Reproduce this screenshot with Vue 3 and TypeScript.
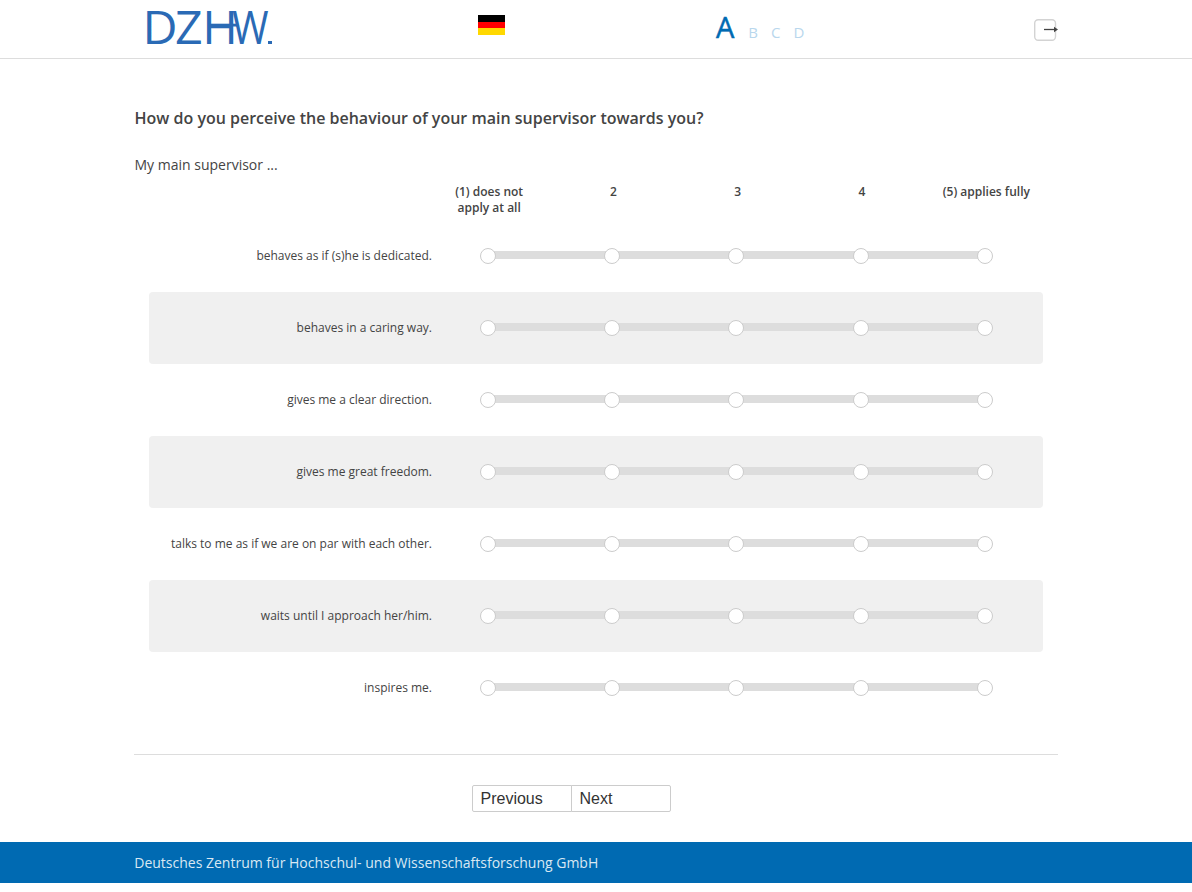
<script setup lang="ts">
const rows: string[] = [
  'behaves as if (s)he is dedicated.',
  'behaves in a caring way.',
  'gives me a clear direction.',
  'gives me great freedom.',
  'talks to me as if we are on par with each other.',
  'waits until I approach her/him.',
  'inspires me.',
]
const heads: string[] = ['(1) does not apply at all', '2', '3', '4', '(5) applies fully']
const steps: number[] = [1, 2, 3, 4, 5]
</script>

<template>
  <div class="page">
    <header class="topbar">
      <div class="topinner">
        <svg class="logo" width="140" height="50" viewBox="0 0 140 50">
          <text class="logotext" x="0 31 57" y="0" transform="translate(2.5 39) scale(1.05 1)">DZH</text>
          <text class="logotext" transform="translate(92 39) scale(0.86 1)">W</text>
          <rect x="68" y="18.7" width="30" height="2.8" fill="#2a6ab5" />
          <rect x="128" y="36" width="4" height="3" fill="#2a6ab5" />
        </svg>
        <div class="flag"><i class="black"></i><i class="red"></i><i class="gold"></i></div>
        <div class="modules">
          <span class="current">A</span>
          <span>B</span>
          <span>C</span>
          <span>D</span>
        </div>
        <svg class="logout" width="24" height="22" viewBox="0 0 24 22" fill="none">
          <rect x="0.7" y="0.7" width="20.8" height="20.6" rx="3.5" stroke="#d3d3d3" stroke-width="1.4" />
          <path d="M10 10.5H21" stroke="#444" stroke-width="1.3" />
          <path d="M20 7.8L24 10.5L20 13.2Z" fill="#444" />
        </svg>
      </div>
    </header>

    <main class="content">
      <h1 class="question">How do you perceive the behaviour of your main supervisor towards you?</h1>
      <p class="stem">My main supervisor ...</p>
      <div class="heads">
        <div v-for="h in heads" :key="h" class="head">{{ h }}</div>
      </div>
      <div class="rows">
        <div v-for="(r, i) in rows" :key="r" class="row" :class="{ alt: i % 2 === 1 }">
          <div class="label">{{ r }}</div>
          <div class="scale">
            <div class="track"></div>
            <span v-for="s in steps" :key="s" class="knob"></span>
          </div>
        </div>
      </div>
      <hr class="rule" />
      <div class="nav">
        <button class="btn" type="button">Previous</button>
        <button class="btn" type="button">Next</button>
      </div>
    </main>

    <footer class="footer">
      <div class="footinner">Deutsches Zentrum für Hochschul- und Wissenschaftsforschung GmbH</div>
    </footer>
  </div>
</template>

<style>
html, body { margin: 0; background: #fff; }
</style>

<style scoped>
.page {
  font-family: "Open Sans", sans-serif;
  color: #444;
  height: 892px;
  overflow: hidden;
}
.topbar {
  height: 58px;
  border-bottom: 1px solid #ddd;
}
.topinner {
  width: 924px;
  margin: 0 auto;
  height: 58px;
  display: flex;
  align-items: center;
  position: relative;
}
.logo {
  flex: none;
  margin-left: 6px;
  margin-top: 2px;
  overflow: visible;
}
.logotext {
  font-family: "Open Sans", sans-serif;
  font-weight: 400;
  font-size: 46px;
  fill: #2a6ab5;
}
.flag {
  flex: none;
  margin-left: 198px;
  width: 27px;
  height: 20px;
  display: flex;
  flex-direction: column;
  margin-top: -8px;
}
.flag i { flex: 1; display: block; }
.black { background: #000; }
.red { background: #f00; }
.gold { background: #ffd800; }
.modules {
  margin-left: 211px;
  display: flex;
  align-items: baseline;
  gap: 13px;
  color: #b9d7ed;
  font-size: 15px;
  margin-top: -6px;
  width: 318px;
}
.current {
  font-size: 29px;
  font-weight: 400;
  -webkit-text-stroke: 0.5px #006ab2;
  color: #006ab2;
  margin-right: 1px;
}
.logout {
  position: absolute;
  left: 900px;
  top: 19px;
}
.content {
  width: 924px;
  margin: 0 auto;
}
.question {
  margin: 0;
  padding: 48px 0 0 0.5px;
  font-size: 16px;
  line-height: 22px;
  font-weight: 600;
  color: #444;
}
.stem {
  margin: 25px 0 0;
  padding-left: 0.5px;
  font-size: 14px;
  line-height: 22px;
}
.heads {
  display: grid;
  grid-template-columns: repeat(5, 124.3px);
  margin: 6px 0 0 293px;
  height: 38px;
}
.head {
  font-size: 12px;
  font-weight: 600;
  line-height: 16px;
  text-align: center;
  padding: 2px 28px 0;
}
.head:nth-child(5) { padding: 2px 0 0; }
.row {
  margin-left: 15px;
  width: 894px;
  height: 72px;
  display: flex;
  align-items: center;
  border-radius: 4px;
}
.row.alt { background: #f0f0f0; }
.label {
  width: 283px;
  text-align: right;
  font-size: 12px;
  line-height: 16px;
}
.scale {
  position: relative;
  margin-left: 48px;
  width: 512.8px;
  height: 16px;
  display: flex;
  justify-content: space-between;
}
.track {
  position: absolute;
  left: 8px;
  right: 8px;
  top: 3px;
  height: 8px;
  background: #ddd;
}
.knob {
  position: relative;
  width: 16px;
  height: 16px;
  box-sizing: border-box;
  border: 1px solid #ccc;
  border-radius: 50%;
  background: #fff;
}
.rule {
  margin: 30px 0 0;
  border: 0;
  border-top: 1px solid #ddd;
}
.nav {
  margin-top: 30px;
  padding-right: 50px;
  display: flex;
  justify-content: center;
}
.btn {
  width: 100px;
  height: 27px;
  box-sizing: border-box;
  background: #fff;
  border: 1px solid #ccc;
  border-radius: 2px 0 0 2px;
  font-family: "Liberation Sans", sans-serif;
  font-size: 16px;
  color: #333;
  text-align: left;
  padding: 0 8px;
}
.btn + .btn {
  margin-left: -1px;
  border-radius: 0 2px 2px 0;
}
.footer {
  margin-top: 30px;
  height: 41px;
  background: #006ab2;
}
.footinner {
  width: 924px;
  margin: 0 auto;
  padding-left: 0.5px;
  color: #d9e8f3;
  font-size: 14px;
  line-height: 41px;
}
</style>
